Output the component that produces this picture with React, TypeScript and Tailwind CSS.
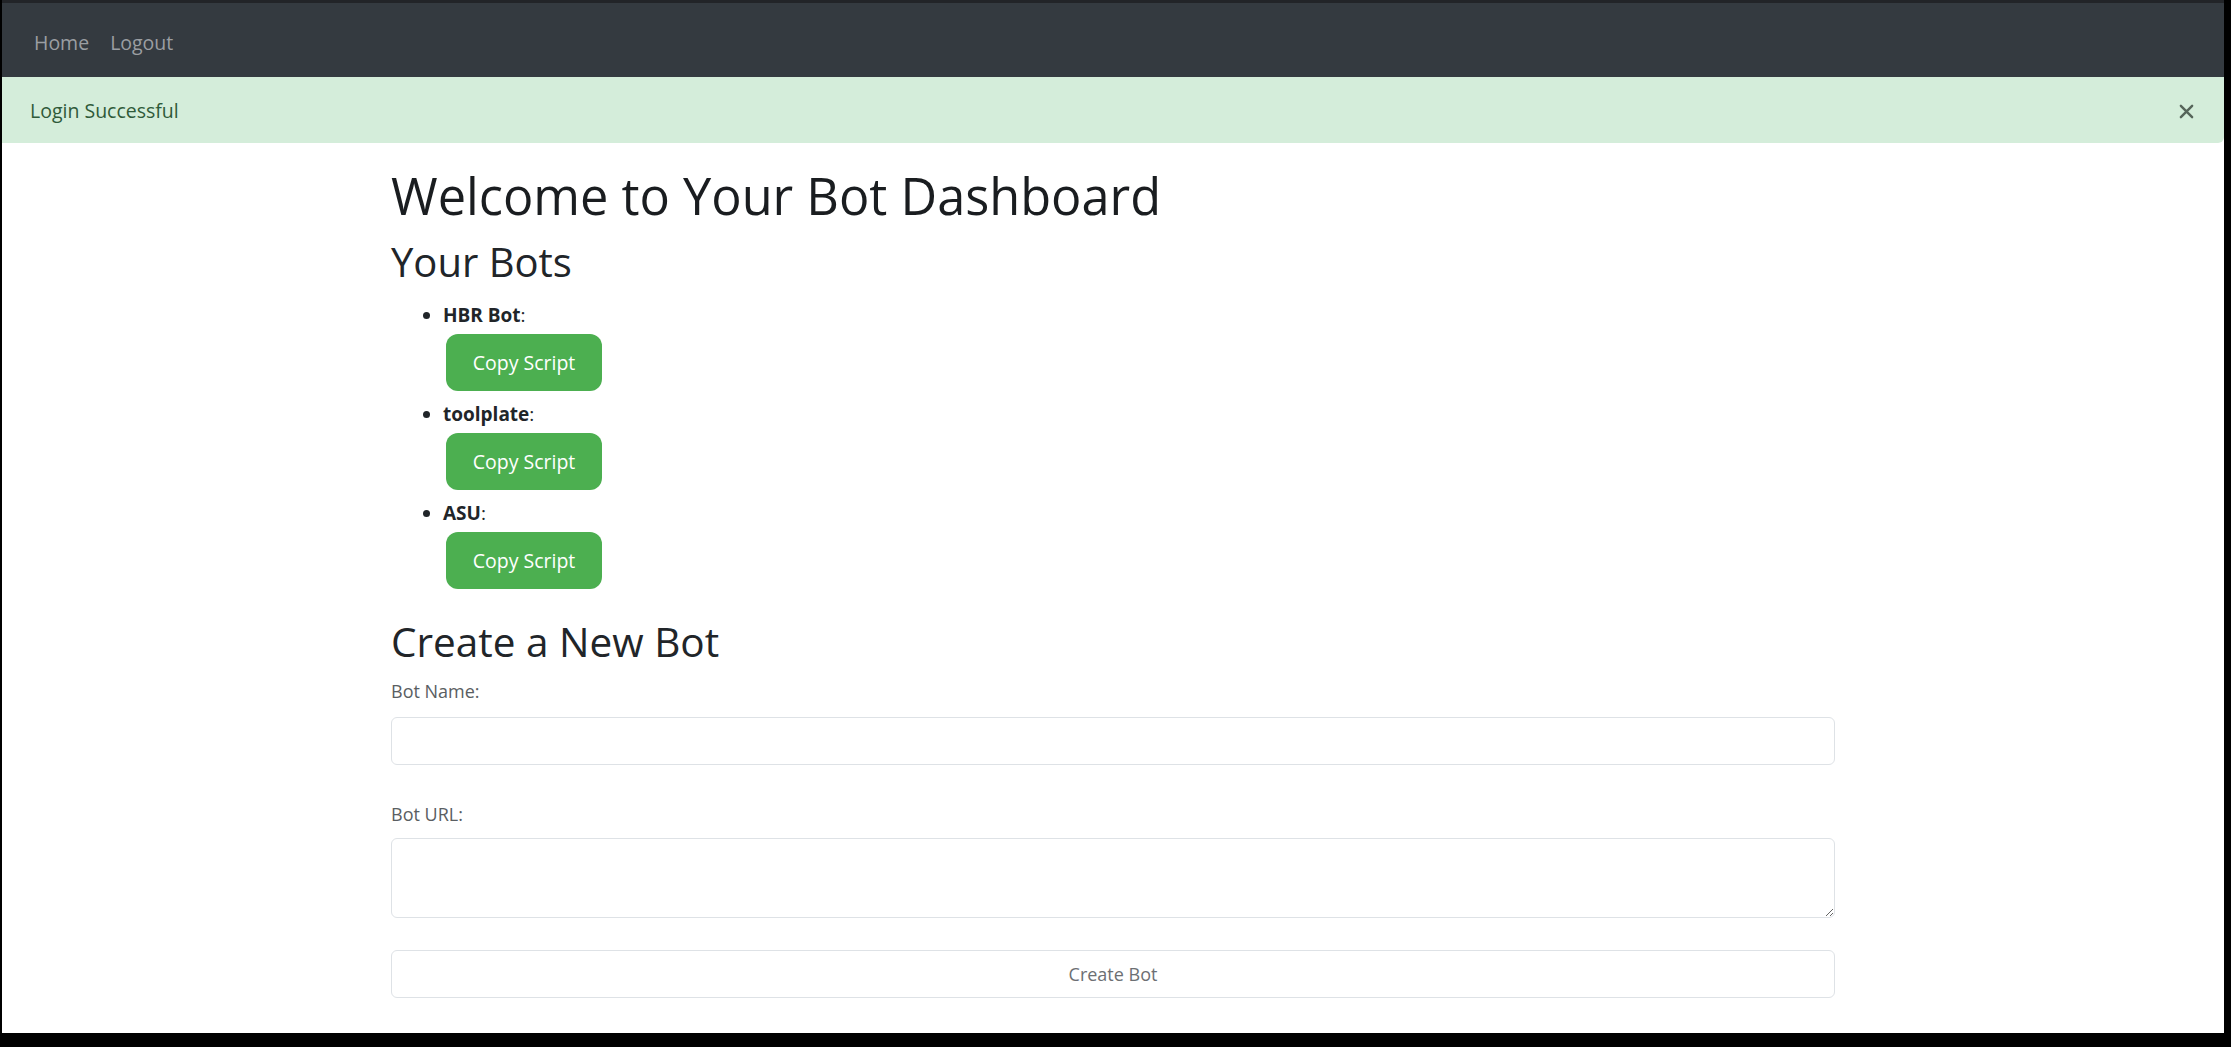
import { useState } from "react";

const bots = ["HBR Bot", "toolplate", "ASU"];

export default function App() {
  const [showAlert, setShowAlert] = useState(true);

  return (
    <div
      className="h-[1047px] bg-black pl-[2px] pr-[7px] pb-[14px] flex flex-col"
      style={{ fontFamily: '"Open Sans", "Noto Sans", sans-serif' }}>
      <div className="h-[3px] bg-[#222428]" />
      <div className="flex-1 bg-white flex flex-col">
        <nav className="h-[74px] bg-[#343a40] flex items-center pl-[32px] pt-[6px] gap-[21px] text-[19.5px] text-[#9b9ea2]">
          <a href="#">Home</a>
          <a href="#">Logout</a>
        </nav>

        {showAlert && (
          <div className="h-[66px] bg-[#d4edda] text-[#2f5a39] flex items-center justify-between pl-[28px] pr-[30px] pt-[2px] rounded-br-[6px] text-[19.5px]">
            <span>Login Successful</span>
            <button
              onClick={() => setShowAlert(false)}
              className="text-[#56655a]">
              <svg width="15" height="15" viewBox="0 0 16 16" fill="none" stroke="currentColor" strokeWidth="2.6" strokeLinecap="round">
                <path d="M2 2l12 12M14 2L2 14" />
              </svg>
            </button>
          </div>
        )}

        <main className="w-[1444px] mx-auto text-[#212529]">
          <h1 className="text-[50.5px] leading-[58px] mt-[24px] text-[#1a1d20]">Welcome to Your Bot Dashboard</h1>
          <h2 className="text-[40px] leading-[48px] mt-[13px]">Your Bots</h2>

          <ul className="list-disc pl-[52px] mt-[15px] flex flex-col gap-[9px]">
            {bots.map((name) => (
              <li key={name} className="text-[19px] leading-[28px]">
                <strong className="font-bold">{name}</strong>:
                <button className="block mt-[5px] ml-[3px] w-[156px] h-[57px] rounded-[12px] bg-[#4caf50] text-white text-[19.5px]">
                  Copy Script
                </button>
              </li>
            ))}
          </ul>

          <h2 className="text-[40.5px] leading-[48px] mt-[29px]">Create a New Bot</h2>

          <form className="flex flex-col" onSubmit={(e) => e.preventDefault()}>
            <label className="text-[18px] leading-[27px] text-[#5a5e62] mt-[12px]">Bot Name:</label>
            <input
              type="text"
              className="mt-[12px] h-[48px] w-full border border-[#dee2e6] rounded-[6px] px-3 outline-none"
            />
            <label className="text-[18px] leading-[27px] text-[#5a5e62] mt-[36px]">Bot URL:</label>
            <textarea
              className="mt-[10px] h-[80px] w-full border border-[#dee2e6] rounded-[6px] px-3 outline-none"
            />
            <button
              type="submit"
              className="mt-[32px] h-[48px] w-full border border-[#dee2e6] rounded-[6px] bg-white text-[18px] text-[#6c6f73]">
              Create Bot
            </button>
          </form>
        </main>
      </div>
    </div>
  );
}
